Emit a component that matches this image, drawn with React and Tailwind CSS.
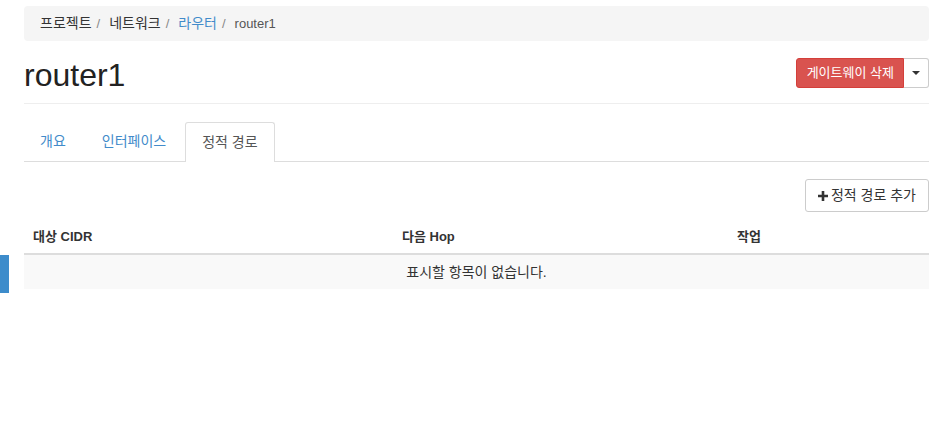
const font = { fontFamily: '"Liberation Sans", "Noto Sans CJK KR", Arial, sans-serif' }

export default function App() {
  return (
    <div className="relative min-h-screen bg-white text-[13px] text-[#333]" style={font}>
      <div className="absolute left-0 top-[255px] h-[38px] w-[9px] bg-[#3d8ccb]" />
      <div className="ml-[24px] mr-[14px] pt-[6px]">
        <div className="flex h-[35px] items-center gap-[5px] rounded bg-[#f5f5f5] px-[16px]">
          <span className="text-[14px] text-[#333]">프로젝트</span>
          <span className="text-[#888]">/</span>
          <span className="ml-[4px] text-[14px] text-[#333]">네트워크</span>
          <span className="text-[#888]">/</span>
          <span className="ml-[4px] text-[14px] text-[#428bca]">라우터</span>
          <span className="text-[#888]">/</span>
          <span className="ml-[4px] text-[#555]">router1</span>
        </div>

        <div className="flex items-center justify-between border-b border-[#eee] pb-[8px] pt-[14px]">
          <h1 className="text-[32px] leading-[40px] text-[#222]">router1</h1>
          <div className="-mt-[4px] flex">
            <button className="h-[30px] rounded-l-[3px] border border-[#d43f3a] bg-[#d9534f] pl-[10px] pr-[9px] text-[13px] text-white">
              게이트웨이 삭제
            </button>
            <button className="flex h-[30px] w-[25px] items-center justify-center rounded-r-[3px] border border-l-0 border-[#ccc] bg-white">
              <svg width="8" height="4" viewBox="0 0 8 4"><path d="M0 0h8L4 4z" fill="#333" /></svg>
            </button>
          </div>
        </div>

        <div className="mt-[18px] flex h-[40px] gap-[2px] border-b border-[#ddd] text-[14px]">
          <div className="flex items-center pl-[16px] pr-[17px] text-[#428bca]">개요</div>
          <div className="flex items-center px-[17px] text-[#428bca]">인터페이스</div>
          <div className="-mb-px flex items-center rounded-t-[3px] border border-b-0 border-[#ddd] bg-white px-[16px] text-[#555]">
            정적 경로
          </div>
        </div>

        <div className="flex justify-end pt-[17px]">
          <button className="flex h-[33px] items-center gap-[3px] rounded-[3px] border border-[#ccc] bg-white px-[12px] text-[14px] text-[#333]">
            <svg width="10" height="10" viewBox="0 0 10 10"><path d="M3.7 0h2.6v3.7H10v2.6H6.3V10H3.7V6.3H0V3.7h3.7z" fill="#333" /></svg>
            정적 경로 추가
          </button>
        </div>

        <div className="mt-[8px]">
          <div className="flex h-[35px] items-center border-b-2 border-[#ddd] font-bold text-[#333]">
            <div className="w-[369px] px-[9px]">대상 CIDR</div>
            <div className="w-[335px] px-[9px]">다음 Hop</div>
            <div className="flex-1 px-[9px]">작업</div>
          </div>
          <div className="flex h-[34px] items-center justify-center bg-[#f9f9f9] text-[14px] text-[#333]">
            표시할 항목이 없습니다.
          </div>
        </div>
      </div>
    </div>
  )
}
